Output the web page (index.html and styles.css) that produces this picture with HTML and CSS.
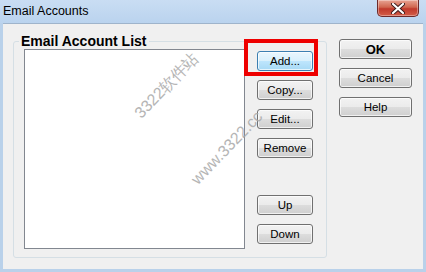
FILE: index.html
```html
<!DOCTYPE html>
<html lang="en">
<head>
  <meta charset="UTF-8">
  <title>Email Accounts</title>
  <link rel="stylesheet" href="styles.css">
</head>
<body>
  <div class="window">
    <div class="titlebar">
      <span class="title">Email Accounts</span>
      <button class="close" aria-label="Close">
        <svg width="14" height="11" viewBox="0 0 14 11">
          <path d="M2 1 L12 10 M12 1 L2 10" stroke="#3a1a1a" stroke-width="4" stroke-linecap="round"/>
          <path d="M2 1 L12 10 M12 1 L2 10" stroke="#ffffff" stroke-width="2.2" stroke-linecap="round"/>
        </svg>
      </button>
    </div>
    <div class="client">
      <fieldset class="group">
        <legend>Email Account List</legend>
        <div class="group-body">
          <div class="listbox"></div>
          <div class="list-buttons">
            <div class="marked">
              <button class="btn btn-hot">Add...</button>
              <span class="marker"></span>
            </div>
            <button class="btn">Copy...</button>
            <button class="btn">Edit...</button>
            <button class="btn">Remove</button>
            <button class="btn btn-up">Up</button>
            <button class="btn">Down</button>
          </div>
        </div>
      </fieldset>
      <div class="dialog-buttons">
        <button class="btn btn-wide btn-default">OK</button>
        <button class="btn btn-wide">Cancel</button>
        <button class="btn btn-wide">Help</button>
      </div>
      <span class="watermark wm-site">3322软件站</span>
      <span class="watermark wm-url">www.3322.cc</span>
    </div>
  </div>
</body>
</html>
```

FILE: styles.css
```css
body {
  margin: 0;
  padding: 0;
  font-family: 'Liberation Sans', Arial, sans-serif;
  background-color: #b9d1ea;
}
.window {
  width: 426px;
  height: 272px;
  background: #b9d1ea; /* window frame */
  overflow: hidden;
}
.titlebar {
  height: 23px;
  display: flex;
  align-items: flex-start;
  background: linear-gradient(#c9ddf3, #bad3ee);
}
.title {
  font-size: 12.5px;
  color: #000;
  margin: 3px 0 0 3px;
  line-height: 16px;
}
.close {
  margin-left: auto;
  margin-right: 7px;
  width: 42px;
  height: 17px;
  padding: 0;
  border: 1px solid #6d2a2a;
  border-top: none;
  border-radius: 0 0 5px 5px;
  background: linear-gradient(#e8a493, #d0664f 45%, #c0392b 55%, #d35d48);
  display: flex;
  align-items: center;
  justify-content: center;
  box-shadow: inset 0 0 0 1px rgba(255, 255, 255, 0.35);
}
.client {
  position: relative;
  margin: 0 3px;
  height: 246px;
  box-sizing: border-box;
  padding-left: 10px;
  background: #f0f0f0;
  border-top: 1px solid #9fb4cb;
  display: flex;
  align-items: flex-start;
  overflow: hidden;
}
.group {
  margin: 9px 0 0 0;
  padding: 0 0 0 10px;
  width: 314px;
  height: 225px;
  box-sizing: border-box;
  border: 1px solid #d5dfe5;
  border-radius: 3px;
  min-width: 0;
}
.group legend {
  font-weight: bold;
  font-size: 14px;
  line-height: 16px;
  color: #000;
  padding: 0 2px;
  margin-left: -5px;
}
.group-body {
  display: flex;
  align-items: flex-start;
}
.listbox {
  width: 221px;
  height: 200px;
  box-sizing: border-box;
  background: #fff;
  border: 1px solid #828790;
}
.list-buttons {
  display: flex;
  flex-direction: column;
  gap: 9px;
  margin-left: 12px;
  padding-top: 2px;
}
.btn {
  width: 56px;
  height: 20px;
  padding: 0;
  font-family: 'Liberation Sans', Arial, sans-serif;
  font-size: 11.5px;
  color: #000;
  border: 1px solid #707070;
  border-radius: 3px;
  background: linear-gradient(#f2f2f2, #ebebeb 50%, #dddddd 50%, #cfcfcf);
  box-shadow: inset 0 0 0 1px rgba(255, 255, 255, 0.7);
}
.btn-hot {
  border-color: #3c7fb1;
  background: linear-gradient(#eaf6fd, #d9f0fc 50%, #bee6fd 50%, #a7d9f5);
}
.btn-up {
  margin-top: 28px;
}
.btn-wide {
  width: 73px;
}
.btn-default {
  font-weight: bold;
  font-size: 13px;
}
.marked {
  position: relative;
}
.marker {
  position: absolute;
  left: -13px;
  top: -12px;
  width: 74px;
  height: 37px;
  box-sizing: border-box;
  border: 4px solid #ee0000;
}
.dialog-buttons {
  display: flex;
  flex-direction: column;
  gap: 9px;
  margin: 15px 0 0 12px;
}
.watermark {
  position: absolute;
  font-size: 16px;
  color: #a9a9a9;
  opacity: 0.85;
  white-space: nowrap;
  transform: translate(-50%, -50%) rotate(-46deg);
  pointer-events: none;
}
.wm-site {
  left: 164px;
  top: 62px;
}
.wm-url {
  left: 224px;
  top: 124px;
}
```
